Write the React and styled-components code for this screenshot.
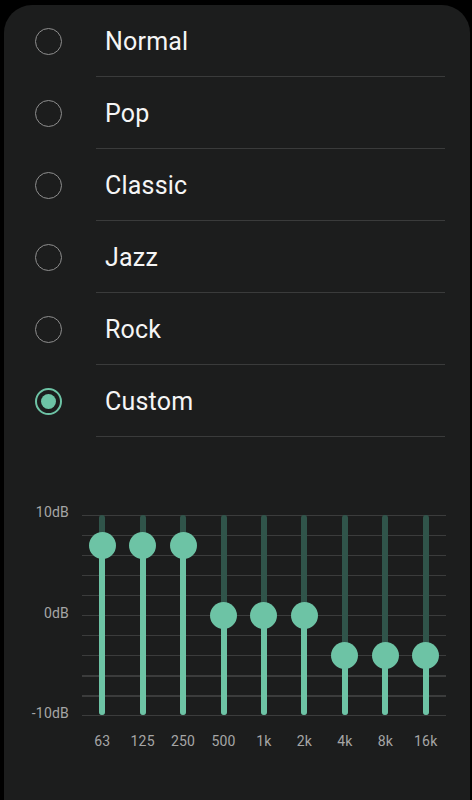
import React from "react";
import styled, { createGlobalStyle } from "styled-components";

const Global = createGlobalStyle`
  html, body { margin: 0; padding: 0; background: #000; }
  body { font-family: Roboto, "Noto Sans", sans-serif; -webkit-font-smoothing: antialiased; }
`;

const TEAL = "#6dc3a5";
const TEAL_DIM = "#30544a";

const Panel = styled.div`
  margin: 5px 2px 0 4px;
  min-height: 795px;
  background: #1c1d1d;
  border-radius: 28px 28px 0 0;
  box-sizing: border-box;
  overflow: hidden;
`;

const List = styled.div`
  display: flex;
  flex-direction: column;
`;

const Row = styled.div`
  display: grid;
  grid-template-columns: 92px 1fr;
  height: 72px;
  cursor: pointer;
`;

const RadioCell = styled.div`
  display: flex;
  align-items: center;
  padding-left: 31px;
`;

const Radio = styled.div`
  box-sizing: border-box;
  width: 27px;
  height: 27px;
  border-radius: 50%;
  border: ${(p) => (p.$checked ? `2px solid ${TEAL}` : "1.5px solid #8e8e8e")};
  display: flex;
  align-items: center;
  justify-content: center;
  &::after {
    content: "";
    display: ${(p) => (p.$checked ? "block" : "none")};
    width: 15px;
    height: 15px;
    border-radius: 50%;
    background: ${TEAL};
  }
`;

const Label = styled.div`
  display: flex;
  align-items: center;
  margin-right: 25px;
  padding: 2px 0 0 9px;
  border-bottom: 1px solid #3a3b3b;
  color: #f5f5f5;
  font-size: 25px;
  letter-spacing: 0.2px;
`;

const Chart = styled.div`
  margin-top: 78px;
  display: grid;
  grid-template-columns: 65px 364px;
  column-gap: 13px;
`;

const Axis = styled.div`
  display: flex;
  flex-direction: column;
  justify-content: space-between;
  align-items: flex-end;
  margin: -11px 0 -5px;
`;

const AxisLabel = styled.div`
  font-size: 14px;
  line-height: 16px;
  letter-spacing: 0.2px;
  color: #a6a6a6;
`;

const Plot = styled.div`
  height: 201px;
  display: grid;
  grid-template-columns: repeat(9, 1fr);
  background: repeating-linear-gradient(
    to bottom,
    #3b3c3c 0px,
    #3b3c3c 1.5px,
    transparent 1.5px,
    transparent 20px
  );
`;

const Band = styled.div`
  position: relative;
  display: flex;
  justify-content: center;
`;

const Track = styled.div`
  position: relative;
  width: 6px;
  height: 200px;
  border-radius: 3px;
  background: ${TEAL_DIM};
`;

const Fill = styled.div`
  position: absolute;
  left: 0;
  right: 0;
  bottom: 0;
  border-radius: 3px;
  background: ${TEAL};
`;

const Thumb = styled.div`
  position: absolute;
  left: 50%;
  width: 27px;
  height: 27px;
  margin: -13.5px 0 0 -13.5px;
  border-radius: 50%;
  background: ${TEAL};
`;

const Freqs = styled.div`
  grid-column: 2;
  display: grid;
  grid-template-columns: repeat(9, 1fr);
  margin-top: 17px;
`;

const Freq = styled.div`
  text-align: center;
  font-size: 14px;
  line-height: 16px;
  letter-spacing: 0.2px;
  color: #a6a6a6;
`;

const presets = ["Normal", "Pop", "Classic", "Jazz", "Rock", "Custom"];
const bands = [
  ["63", 7],
  ["125", 7],
  ["250", 7],
  ["500", 0],
  ["1k", 0],
  ["2k", 0],
  ["4k", -4],
  ["8k", -4],
  ["16k", -4],
];

export default function App() {
  const selected = "Custom";
  return (
    <>
      <Global />
      <Panel>
        <List>
          {presets.map((p) => (
            <Row key={p}>
              <RadioCell>
                <Radio $checked={p === selected} />
              </RadioCell>
              <Label>{p}</Label>
            </Row>
          ))}
        </List>
        <Chart>
          <Axis>
            <AxisLabel>10dB</AxisLabel>
            <AxisLabel>0dB</AxisLabel>
            <AxisLabel>-10dB</AxisLabel>
          </Axis>
          <Plot>
            {bands.map(([f, v]) => {
              const y = (10 - v) * 10;
              return (
                <Band key={f}>
                  <Track>
                    <Fill style={{ top: y }} />
                    <Thumb style={{ top: y }} />
                  </Track>
                </Band>
              );
            })}
          </Plot>
          <Freqs>
            {bands.map(([f]) => (
              <Freq key={f}>{f}</Freq>
            ))}
          </Freqs>
        </Chart>
      </Panel>
    </>
  );
}
